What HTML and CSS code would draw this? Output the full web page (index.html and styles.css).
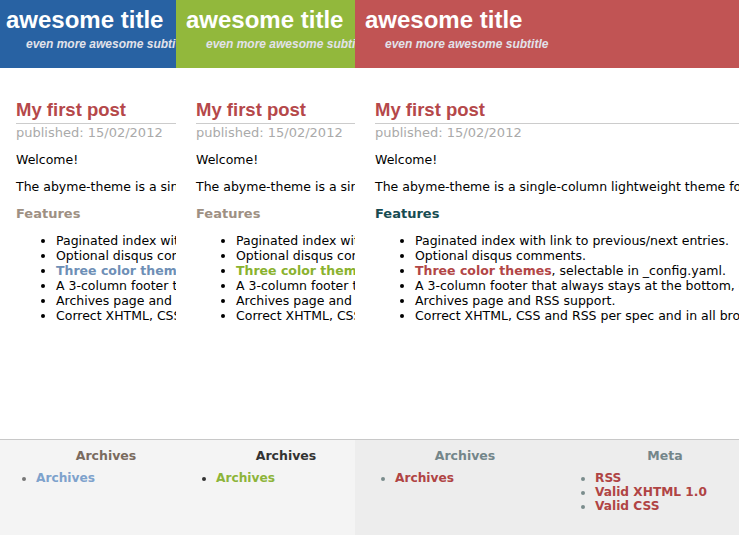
FILE: index.html
```html
<!DOCTYPE html>
<html>
<head>
<meta charset="utf-8">
<link rel="stylesheet" href="styles.css">
</head>
<body>
<div class="strip">
  <div class="panel p1">
    <div class="page blue">
      <header class="head"><h1 class="title">awesome title</h1><p class="sub">even more awesome subtitle</p></header>
      <main class="main">
        <h2 class="post">My first post</h2>
        <p class="date">published: 15/02/2012</p>
        <p class="txt">Welcome!</p>
        <p class="txt">The abyme-theme is a single-column lightweight theme for your blog.</p>
        <h3 class="feat">Features</h3>
        <ul class="list">
          <li>Paginated index with link to previous/next entries.</li>
          <li>Optional disqus comments.</li>
          <li><a class="lnk">Three color themes</a>, selectable in _config.yaml.</li>
          <li>A 3-column footer that always stays at the bottom, even on short pages.</li>
          <li>Archives page and RSS support.</li>
          <li>Correct XHTML, CSS and RSS per spec and in all browsers.</li>
        </ul>
      </main>
      <footer class="foot">
        <div class="col"><h4 class="fh">Archives</h4><ul class="fl"><li><a class="flnk">Archives</a></li></ul></div>
        <div class="col"><h4 class="fh">Meta</h4><ul class="fl"><li><a class="flnk">RSS</a></li><li><a class="flnk">Valid XHTML 1.0</a></li><li><a class="flnk">Valid CSS</a></li></ul></div>
      </footer>
    </div>
  </div>
  <div class="panel p2">
    <div class="page green">
      <header class="head"><h1 class="title">awesome title</h1><p class="sub">even more awesome subtitle</p></header>
      <main class="main">
        <h2 class="post">My first post</h2>
        <p class="date">published: 15/02/2012</p>
        <p class="txt">Welcome!</p>
        <p class="txt">The abyme-theme is a single-column lightweight theme for your blog.</p>
        <h3 class="feat">Features</h3>
        <ul class="list">
          <li>Paginated index with link to previous/next entries.</li>
          <li>Optional disqus comments.</li>
          <li><a class="lnk">Three color themes</a>, selectable in _config.yaml.</li>
          <li>A 3-column footer that always stays at the bottom, even on short pages.</li>
          <li>Archives page and RSS support.</li>
          <li>Correct XHTML, CSS and RSS per spec and in all browsers.</li>
        </ul>
      </main>
      <footer class="foot">
        <div class="col"><h4 class="fh">Archives</h4><ul class="fl"><li><a class="flnk">Archives</a></li></ul></div>
        <div class="col"><h4 class="fh">Meta</h4><ul class="fl"><li><a class="flnk">RSS</a></li><li><a class="flnk">Valid XHTML 1.0</a></li><li><a class="flnk">Valid CSS</a></li></ul></div>
      </footer>
    </div>
  </div>
  <div class="panel p3">
    <div class="page red">
      <header class="head"><h1 class="title">awesome title</h1><p class="sub">even more awesome subtitle</p></header>
      <main class="main">
        <h2 class="post">My first post</h2>
        <p class="date">published: 15/02/2012</p>
        <p class="txt">Welcome!</p>
        <p class="txt">The abyme-theme is a single-column lightweight theme for your blog.</p>
        <h3 class="feat">Features</h3>
        <ul class="list">
          <li>Paginated index with link to previous/next entries.</li>
          <li>Optional disqus comments.</li>
          <li><a class="lnk">Three color themes</a>, selectable in _config.yaml.</li>
          <li>A 3-column footer that always stays at the bottom, even on short pages.</li>
          <li>Archives page and RSS support.</li>
          <li>Correct XHTML, CSS and RSS per spec and in all browsers.</li>
        </ul>
      </main>
      <footer class="foot">
        <div class="col"><h4 class="fh">Archives</h4><ul class="fl"><li><a class="flnk">Archives</a></li></ul></div>
        <div class="col"><h4 class="fh">Meta</h4><ul class="fl"><li><a class="flnk">RSS</a></li><li><a class="flnk">Valid XHTML 1.0</a></li><li><a class="flnk">Valid CSS</a></li></ul></div>
      </footer>
    </div>
  </div>
</div>
</body>
</html>
```

FILE: styles.css
```css
* { box-sizing: border-box; }
html, body { margin: 0; padding: 0; background: #fff; }
body { font-family: "DejaVu Sans", Verdana, sans-serif; font-size: 12.5px; color: #000; }

.strip { display: flex; width: 739px; height: 535px; overflow: hidden; }
.panel { overflow: hidden; height: 535px; flex: none; }
.p1 { width: 176px; }
.p2 { width: 179px; }
.p3 { width: 384px; }
.p1 .page { margin-left: -4px; }

.page { width: 760px; height: 535px; display: flex; flex-direction: column; }

.head { height: 68px; flex: none; padding: 6px 10px 0; }
.blue .head { background: #2862a3; }
.green .head { background: #92b83c; }
.red .head { background: #c15454; }
.title { margin: 0; font: bold 24px/28px "Liberation Sans", Arial, sans-serif; color: #fff; }
.sub { margin: 2px 0 0 20px; font: italic bold 12px/16px "Liberation Sans", Arial, sans-serif; color: #e2e2ea; }

.main { flex: 1; padding: 31px 0 0 20px; }
.post { margin: 0; font: bold 18.5px/22px "Liberation Sans", Arial, sans-serif; color: #b5484a; border-bottom: 1px solid #cccccc; padding-bottom: 2px; }
.date { margin: 0; font-size: 13px; line-height: 17px; color: #aaaaaa; }
.txt { margin: 10px 0 0; line-height: 17px; }
.feat { margin: 10px 0 0; font-size: 13px; line-height: 17px; font-weight: bold; color: #9e9083; }
.red .feat { color: #174c52; }
.list { margin: 11px 0 0; padding-left: 40px; line-height: 15px; }
.lnk { font-weight: bold; text-decoration: none; }
.blue .lnk { color: #6e8fb6; }
.green .lnk { color: #8ab22f; }
.red .lnk { color: #b24646; }

.foot { height: 96px; flex: none; border-top: 1px solid #c8c8c8; background: #f4f4f4; display: flex; padding: 8px 0 0 10px; }
.red .foot { background: #ededed; }
.col { width: 200px; }
.fh { margin: 0; text-align: center; font-size: 12.5px; line-height: 16px; font-weight: bold; color: #7a6b5f; }
.green .fh { color: #333; }
.red .fh { color: #74868a; }
.fl { margin: 7px 0 0; padding-left: 30px; font-size: 12.2px; line-height: 14px; color: #777; }
.green .fl { color: #333; }
.red .fl { color: #7a8c8c; }
.flnk { font-weight: bold; text-decoration: none; }
.blue .flnk { color: #7ea2cc; }
.green .flnk { color: #8db43a; }
.red .flnk { color: #b04444; }
```
